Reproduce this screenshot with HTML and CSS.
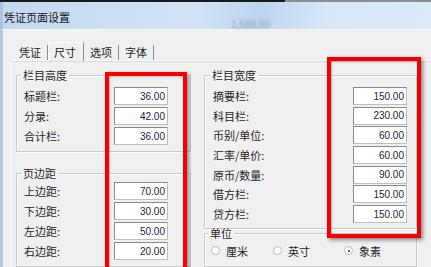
FILE: index.html
```html
<!DOCTYPE html>
<html lang="zh-CN">
<head>
  <meta charset="UTF-8">
  <title>凭证页面设置</title>
  <link rel="stylesheet" href="styles.css">
</head>
<body>
  <div class="window">
    <div class="topline"></div>
    <div class="titlebar">
      <span class="title">凭证页面设置</span>
      <span class="ghost">1,588.50</span>
    </div>

    <div class="client">
      <div class="tabs">
        <span class="tab">凭证</span>
        <span class="tab active">尺寸</span>
        <span class="tab">选项</span>
        <span class="tab">字体</span>
      </div>

      <div class="page">
        <div class="col col-left">
          <fieldset class="group g-height">
            <legend>栏目高度</legend>
            <div class="row"><span class="label">标题栏:</span><input type="text" value="36.00"></div>
            <div class="row"><span class="label">分录:</span><input type="text" value="42.00"></div>
            <div class="row"><span class="label">合计栏:</span><input type="text" value="36.00"></div>
          </fieldset>

          <fieldset class="group g-margin">
            <legend>页边距</legend>
            <div class="row"><span class="label">上边距:</span><input type="text" value="70.00"></div>
            <div class="row"><span class="label">下边距:</span><input type="text" value="30.00"></div>
            <div class="row"><span class="label">左边距:</span><input type="text" value="50.00"></div>
            <div class="row"><span class="label">右边距:</span><input type="text" value="20.00"></div>
          </fieldset>
        </div>

        <div class="col col-right">
          <fieldset class="group g-width">
            <legend>栏目宽度</legend>
            <div class="row"><span class="label">摘要栏:</span><input type="text" value="150.00"></div>
            <div class="row"><span class="label">科目栏:</span><input type="text" value="230.00"></div>
            <div class="row"><span class="label">币别/单位:</span><input type="text" value="60.00"></div>
            <div class="row"><span class="label">汇率/单价:</span><input type="text" value="60.00"></div>
            <div class="row"><span class="label">原币/数量:</span><input type="text" value="90.00"></div>
            <div class="row"><span class="label">借方栏:</span><input type="text" value="150.00"></div>
            <div class="row"><span class="label">贷方栏:</span><input type="text" value="150.00"></div>
          </fieldset>

          <fieldset class="group g-unit">
            <legend>单位</legend>
            <div class="radios">
              <span class="opt"><span class="radio"></span>厘米</span>
              <span class="opt"><span class="radio"></span>英寸</span>
              <span class="opt"><span class="radio on"></span>象素</span>
            </div>
          </fieldset>
        </div>
      </div>
    </div>

    <!-- annotation boxes drawn over the dialog -->
    <div class="mark mark-left"></div>
    <div class="mark mark-right"></div>
  </div>
</body>
</html>
```

FILE: styles.css
```css
body {
  margin: 0;
  background: #f0f0f0;
  font-family: "Noto Sans CJK SC", "Noto Sans", sans-serif;
  font-size: 11px;
  color: #1e1e1e;
}

.window {
  position: relative;
  width: 431px;
  height: 267px;
  overflow: hidden;
  background: #f0f0f0;
}

.topline {
  height: 2px;
  background: linear-gradient(90deg, #1a1a1a 0, #1a1a1a 285px, #8d8d8d 285px);
}

.titlebar {
  position: relative;
  height: 28px;
  background: linear-gradient(100deg, #c3d9f0 0%, #d2e3f5 45%, #bcd5ef 60%, #d6e7f8 75%, #dcebfa 100%);
  border-left: 3px solid #a9c3df;
  border-bottom: 1px solid #f4f8fc;
  box-sizing: border-box;
}

.title {
  position: absolute;
  left: 1px;
  top: 8px;
  line-height: 14px;
  color: #111;
}

.ghost {
  position: absolute;
  left: 228px;
  top: 17px;
  font-family: "Liberation Sans", sans-serif;
  font-size: 10px;
  color: #8fa4bf;
  filter: blur(1.2px);
}

.client {
  height: 237px;
  border-left: 3px solid #b4c9e0;
  padding-top: 12px;
  box-sizing: border-box;
}

.tabs {
  display: flex;
  align-items: flex-end;
  height: 18px;
  margin-left: 10px;
}

.tab {
  height: 15px;
  line-height: 15px;
  padding: 0 6px;
  border-right: 1px solid #8a8a8a;
  box-sizing: border-box;
}

.tab.active {
  height: 19px;
  line-height: 19px;
  margin-bottom: -1px;
  padding: 0 7px 0 5px;
  border-left: 1px solid #fff;
  border-top: 1px solid #fff;
  background: #f0f0f0;
  position: relative;
}

.page {
  display: flex;
  gap: 13px;
  margin-left: 7px;
  padding: 8px 0 0 5px;
  border-top: 1px solid #fff;
  border-left: 1px solid #fff;
  box-shadow: inset 0 1px 0 #dcdcdc;
}

.col {
  display: flex;
  flex-direction: column;
}

.group {
  margin: 0;
  border: 1px solid #c9c9c9;
  box-shadow: 1px 1px 0 #fff, inset 1px 1px 0 #fff;
}

.group legend {
  margin-left: -3px;
  padding: 0 2px;
  line-height: 13px;
}

.row {
  display: flex;
  align-items: center;
  height: 18px;
  margin-bottom: 2px;
}

.row:last-child {
  margin-bottom: 0;
}

.label {
  flex: none;
}

.row input {
  width: 54px;
  height: 18px;
  box-sizing: border-box;
  margin: 0;
  padding: 0 2px 0 0;
  border: 1px solid;
  border-color: #8a8a8a #bdbdbd #bdbdbd #8a8a8a;
  background: #fff;
  font-family: "Liberation Sans", sans-serif;
  font-size: 10px;
  color: #1d1d3a;
  text-align: right;
}

.col-left .label {
  width: 90px;
}

.g-height {
  width: 175px;
  box-sizing: border-box;
  padding: 5px 0 6px 7px;
}

.g-margin {
  width: 175px;
  box-sizing: border-box;
  margin-top: 15px;
  padding: 2px 0 6px 7px;
}

.col-right .label {
  width: 140px;
}

.col-right .row {
  margin-bottom: 1.7px;
}

.g-width {
  width: 213px;
  box-sizing: border-box;
  padding: 5px 0 3px 8px;
}

.g-unit {
  width: 213px;
  box-sizing: border-box;
  margin-top: -2px;
  padding: 4px 0 8px 6px;
}

.radios {
  display: flex;
  height: 14px;
  align-items: center;
}

.opt {
  display: flex;
  align-items: center;
  gap: 6px;
  width: 62px;
  flex: none;
}

.opt:nth-child(2) {
  width: 71px;
}

.radio {
  width: 9px;
  height: 9px;
  border-radius: 50%;
  border: 1px solid #b8b8b8;
  background: #fff;
  box-sizing: border-box;
  position: relative;
}

.radio.on::after {
  content: "";
  position: absolute;
  left: 2.5px;
  top: 2.5px;
  width: 2.5px;
  height: 2.5px;
  border-radius: 50%;
  background: #222;
}

.mark {
  position: absolute;
  border: 4px solid #f40000;
  box-shadow: 2px 2px 4px rgba(0, 0, 0, 0.45), inset 1px 1px 2px rgba(0, 0, 0, 0.25);
  box-sizing: border-box;
}

.mark-left {
  left: 105px;
  top: 72px;
  width: 82px;
  height: 210px;
}

.mark-right {
  left: 327px;
  top: 57px;
  width: 94px;
  height: 181px;
}
```
